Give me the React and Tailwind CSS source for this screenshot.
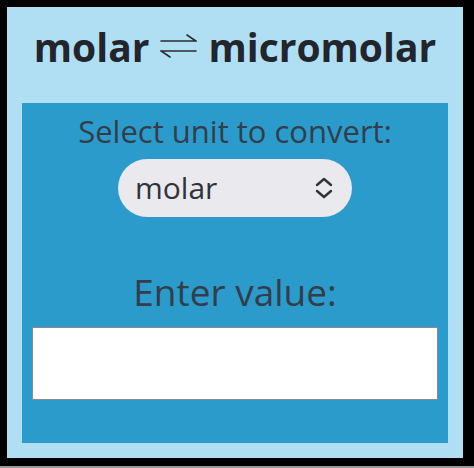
import React from "react";

export default function App() {
  return (
    <div className="w-[474px] h-[468px] bg-black flex flex-col font-['Open_Sans',sans-serif]">
      <div className="flex-1 pt-[7px] pl-[7px]">
        <div className="w-[456px] h-[451px] bg-[#b0dff3] flex flex-col">
          <h1 className="h-[96px] pt-[16px] flex justify-center items-start text-[39px] leading-[48px] font-bold text-[#22252b] whitespace-nowrap">
            <span>molar</span>
            <svg className="mx-[11px] mt-[10px]" width="37" height="26" viewBox="0 0 37 26" fill="none" stroke="#2a2d33" strokeWidth="1.6" strokeLinecap="round">
              <path d="M1 8h35l-9-6" />
              <path d="M36 18H1l9 6" />
            </svg>
            <span>micromolar</span>
          </h1>
          <div className="mx-[15px] h-[340px] bg-[#2a9bcb] flex flex-col items-center pt-[10px]">
            <p className="text-[31px] text-[#343d4a] leading-[36px] whitespace-nowrap">Select unit to convert:</p>
            <div className="mt-[10px] w-[234px] h-[58px] rounded-full bg-[#e9e9ee] flex items-center justify-between pl-[17px] pr-[17px]">
              <span className="text-[30px] text-[#303338] leading-[40px]">molar</span>
              <svg width="22" height="24" viewBox="0 0 22 24" fill="none" stroke="#303338" strokeWidth="2.4" strokeLinecap="round" strokeLinejoin="round">
                <path d="M4 9l7-6 7 6" />
                <path d="M4 15l7 6 7-6" />
              </svg>
            </div>
            <p className="mt-[53px] text-[37px] text-[#343d4a] leading-[44px]">Enter value:</p>
            <input className="mt-[13px] w-[406px] h-[73px] bg-white border border-[#8a8a8a] outline-none" />
          </div>
        </div>
      </div>
      <div className="h-[2px] bg-[#9a9a9a]" />
    </div>
  );
}
